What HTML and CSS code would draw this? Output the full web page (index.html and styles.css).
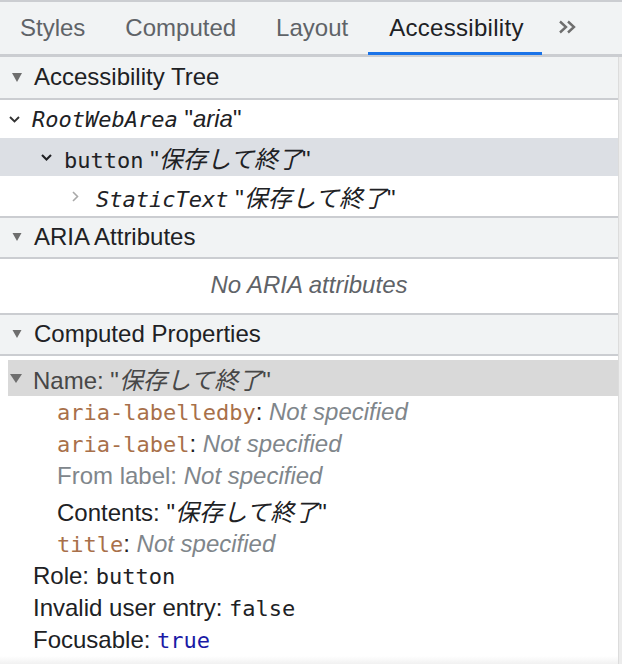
FILE: index.html
```html
<!DOCTYPE html>
<html lang="ja">
<head>
<meta charset="utf-8">
<title>Accessibility</title>
<link rel="stylesheet" href="styles.css">
</head>
<body>
<div class="tabbar">
  <div class="tab">Styles</div>
  <div class="tab">Computed</div>
  <div class="tab">Layout</div>
  <div class="tab active">Accessibility</div>
  <div class="more"><svg width="18" height="14" viewBox="0 0 18 14"><path d="M2 1.5 L8 7 L2 12.5 M10 1.5 L16 7 L10 12.5" fill="none" stroke="#6e6e6e" stroke-width="2.4"/></svg></div>
</div>
<div class="main">
  <div class="pane">
    <div class="sec-head first"><svg class="tri" width="10" height="9" viewBox="0 0 10 9"><path d="M0 0 H10 L5 9 Z" fill="#6e6e6e"/></svg><span>Accessibility Tree</span></div>
    <div class="tree">
      <div class="node lv0"><span class="chev"><svg width="11" height="7" viewBox="0 0 11 7"><path d="M1 1 L5.5 5.5 L10 1" fill="none" stroke="#333" stroke-width="1.9"/></svg></span><span class="txt"><span class="mono it">RootWebArea</span> <span class="q">"<i>aria</i>"</span></span></div>
      <div class="node lv1 sel"><span class="chev"><svg width="11" height="7" viewBox="0 0 11 7"><path d="M1 1 L5.5 5.5 L10 1" fill="none" stroke="#202124" stroke-width="2.1"/></svg></span><span class="txt"><span class="mono">button</span> <span class="q">"<i>保存して終了</i>"</span></span></div>
      <div class="node lv2 tall"><span class="chev"><svg width="7" height="11" viewBox="0 0 7 11"><path d="M1 1 L5.5 5.5 L1 10" fill="none" stroke="#a9a9a9" stroke-width="1.6"/></svg></span><span class="txt"><span class="mono it">StaticText</span> <span class="q">"<i>保存して終了</i>"</span></span></div>
    </div>
    <div class="sec-head"><svg class="tri" width="10" height="9" viewBox="0 0 10 9"><path d="M0.5 0 H9.5 L5 8 Z" fill="#6e6e6e"/></svg><span>ARIA Attributes</span></div>
    <div class="empty"><i>No ARIA attributes</i></div>
    <div class="sec-head"><svg class="tri" width="10" height="9" viewBox="0 0 10 9"><path d="M0.5 0 H9.5 L5 8 Z" fill="#6e6e6e"/></svg><span>Computed Properties</span></div>
    <div class="props">
      <div class="prop name-row cjk"><svg class="ptri" width="12" height="9" viewBox="0 0 12 9"><path d="M0 0 H12 L6 9 Z" fill="#6e6e6e"/></svg><span class="txt">Name: "<i>保存して終了</i>"</span></div>
      <div class="prop sub"><span class="txt"><span class="mono attr">aria-labelledby</span>: <i class="ns">Not specified</i></span></div>
      <div class="prop sub"><span class="txt"><span class="mono attr">aria-label</span>: <i class="ns">Not specified</i></span></div>
      <div class="prop sub"><span class="txt"><span class="muted">From label:</span> <i class="ns">Not specified</i></span></div>
      <div class="prop sub cjk"><span class="txt">Contents: "<i>保存して終了</i>"</span></div>
      <div class="prop sub"><span class="txt"><span class="mono attr">title</span>: <i class="ns">Not specified</i></span></div>
      <div class="prop top"><span class="txt">Role: <span class="mono">button</span></span></div>
      <div class="prop top"><span class="txt">Invalid user entry: <span class="mono">false</span></span></div>
      <div class="prop top"><span class="txt">Focusable: <span class="mono kw">true</span></span></div>
    </div>
    <div class="fade"></div>
  </div>
  <div class="scroll"></div>
</div>
</body>
</html>
```
FILE: styles.css
```css
* { box-sizing: border-box; }

html, body {
  margin: 0;
  padding: 0;
  background: #ffffff;
}

body {
  width: 622px;
  height: 664px;
  overflow: hidden;
  font-family: "Liberation Sans", "Noto Sans CJK JP", sans-serif;
  font-size: 24px;
  color: #202124;
}

.mono {
  font-family: "DejaVu Sans Mono", "Liberation Mono", monospace;
  font-size: 22px;
}

.it { font-style: italic; }

i { font-style: italic; }

/* Tab bar */
.tabbar {
  display: flex;
  height: 57px;
  background: #f1f3f4;
  border-top: 2px solid #cbcdd1;
  border-bottom: 3px solid #cbcdd1;
}

.tab {
  position: relative;
  display: flex;
  align-items: center;
  padding: 0 20px;
  color: #5f6368;
  white-space: nowrap;
}

.tab.active {
  color: #202124;
  padding: 0 18px 0 21px;
  letter-spacing: 0.3px;
}

.tab.active::after {
  content: "";
  position: absolute;
  left: 0;
  right: 0;
  bottom: -1px;
  height: 3px;
  background: #1a73e8;
}

.more {
  display: flex;
  align-items: center;
  padding-left: 16px;
  padding-bottom: 2px;
}

/* Main */
.main {
  display: flex;
  height: 607px;
}

.pane {
  flex: 1;
  display: flex;
  flex-direction: column;
}

.scroll {
  width: 4px;
  background: #ececec;
  border-left: 1px solid #dcdcdc;
}

.sec-head {
  display: flex;
  align-items: center;
  flex: none;
  height: 41px;
  padding-left: 12px;
  padding-bottom: 1px;
  background: #f1f3f4;
  border-bottom: 2px solid #cbcdd1;
  color: #202124;
}

.sec-head.first {
  height: 43px;
  padding-bottom: 2px;
}

.sec-head .tri {
  margin-right: 12px;
  margin-top: 1px;
}

/* Tree */
.tree {
  flex: none;
  border-bottom: 2px solid #cbcdd1;
}

.node {
  display: flex;
  align-items: center;
  height: 38px;
}

.node.tall { height: 40px; }

.node.sel { background: #dcdfe4; }

.node.lv0 { padding-left: 9px; }
.node.lv1 { padding-left: 41px; }
.node.lv2 { padding-left: 72px; }

.chev {
  display: flex;
  align-items: center;
  width: 23px;
  flex: none;
}

.node.lv2 .chev { width: 24px; }

.q { font-style: normal; }

.empty {
  display: flex;
  align-items: center;
  justify-content: center;
  flex: none;
  height: 56px;
  padding-bottom: 2px;
  border-bottom: 2px solid #cbcdd1;
  color: #5f6368;
}

/* Computed properties */
.props {
  flex: none;
  padding: 4px 0 0 8px;
}

.prop {
  display: flex;
  align-items: center;
  height: 32px;
  white-space: nowrap;
}

.prop.cjk { height: 36px; }

.name-row {
  background: #d9d9d9;
  color: #474747;
  padding-left: 2px;
}

.ptri {
  margin-right: 11px;
  flex: none;
}

.sub { padding-left: 49px; }

.top { padding-left: 25px; }

.attr { color: #a8704a; }

.ns { color: #80868b; }

.muted { color: #80868b; }

.kw { color: #1a1aa6; }

.fade {
  flex: 1;
  background: linear-gradient(#ffffff, #f1f1f1);
}
```
